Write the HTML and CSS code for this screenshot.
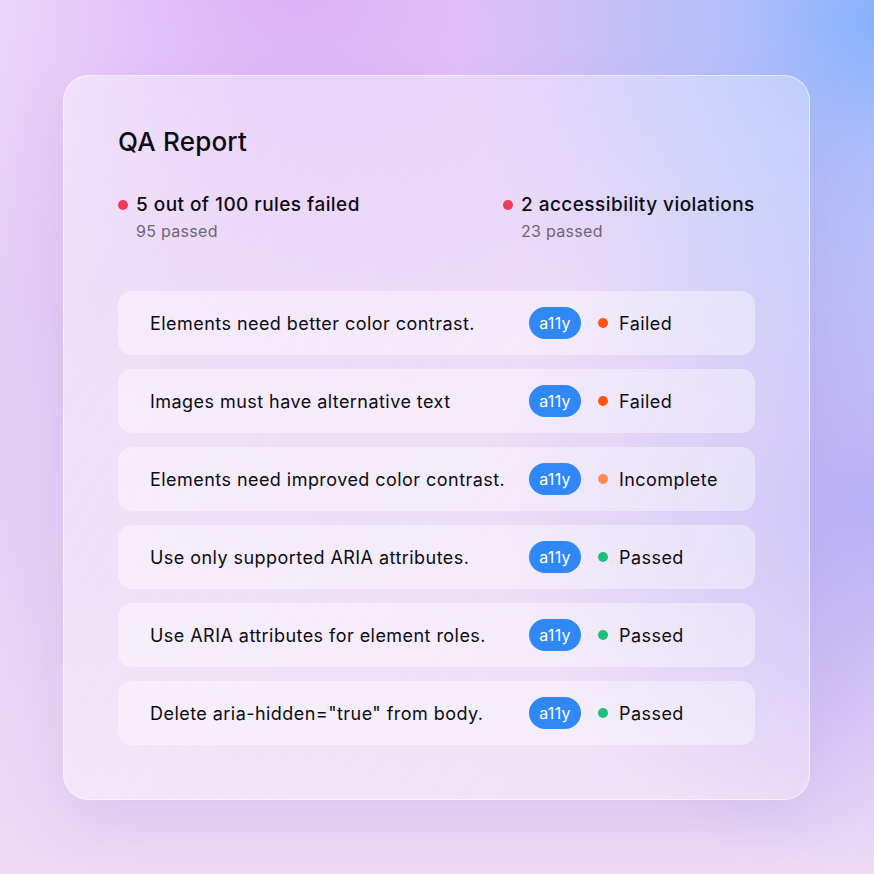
FILE: index.html
```html
<!DOCTYPE html>
<html>
<head>
<meta charset="utf-8">
<link rel="stylesheet" href="styles.css">
</head>
<body>
<div class="page">
  <div class="card">
    <h1 class="title">QA Report</h1>
    <div class="stats">
      <div class="stat">
        <div class="stat-main"><span class="dot red"></span>5 out of 100 rules failed</div>
        <div class="stat-sub">95 passed</div>
      </div>
      <div class="stat">
        <div class="stat-main"><span class="dot red"></span>2 accessibility violations</div>
        <div class="stat-sub">23 passed</div>
      </div>
    </div>
    <div class="rows">
      <div class="row"><span class="rule">Elements need better color contrast.</span><span class="badge">a11y</span><span class="status"><span class="sdot failed"></span>Failed</span></div>
      <div class="row"><span class="rule">Images must have alternative text</span><span class="badge">a11y</span><span class="status"><span class="sdot failed"></span>Failed</span></div>
      <div class="row"><span class="rule">Elements need improved color contrast.</span><span class="badge">a11y</span><span class="status"><span class="sdot incomplete"></span>Incomplete</span></div>
      <div class="row"><span class="rule">Use only supported ARIA attributes.</span><span class="badge">a11y</span><span class="status"><span class="sdot passed"></span>Passed</span></div>
      <div class="row"><span class="rule">Use ARIA attributes for element roles.</span><span class="badge">a11y</span><span class="status"><span class="sdot passed"></span>Passed</span></div>
      <div class="row"><span class="rule">Delete aria-hidden="true" from body.</span><span class="badge">a11y</span><span class="status"><span class="sdot passed"></span>Passed</span></div>
    </div>
  </div>
</div>
</body>
</html>
```
FILE: styles.css
```css
html, body {
  margin: 0;
  padding: 0;
}
body {
  font-family: Inter, "Noto Sans", sans-serif;
  color: #0d0b14;
}
.page {
  width: 874px;
  height: 874px;
  box-sizing: border-box;
  padding: 75px 64px 0 63px;
  background:
    radial-gradient(circle at 880px 20px, #85b2fd 0, rgba(140,180,252,0.6) 140px, rgba(170,180,250,0) 420px),
    radial-gradient(circle at 300px -20px, #dcb2f8 0, rgba(222,184,248,0.6) 200px, rgba(222,184,248,0) 450px),
    radial-gradient(circle at 880px 500px, #b8b0f6 0, rgba(190,180,248,0) 380px),
    radial-gradient(circle at 0px 0px, #f2e6f8 0, rgba(242,230,248,0) 300px),
    linear-gradient(180deg, #e6ccf6 0%, #e4d0f4 60%, #eedcf6 100%);
}
.card {
  width: 747px;
  height: 725px;
  box-sizing: border-box;
  border-radius: 26px;
  background: linear-gradient(120deg, rgba(255,255,255,0.42) 0%, rgba(255,255,255,0.3) 60%, rgba(255,255,255,0.25) 100%);
  border: 1.5px solid rgba(255,255,255,0.55);
  box-shadow: 0 30px 60px rgba(130, 90, 190, 0.14);
  padding: 50px 54px 0 54px;
}
.title {
  margin: 0;
  font-size: 26px;
  font-weight: 500;
  line-height: 32px;
  letter-spacing: 0.2px;
}
.stats {
  display: flex;
  margin-top: 35px;
}
.stat {
  flex: none;
}
.stat:first-child {
  width: 385px;
}
.stat-main {
  display: flex;
  align-items: center;
  font-size: 19px;
  font-weight: 500;
  line-height: 24px;
  letter-spacing: 0.45px;
}
.dot {
  width: 10px;
  height: 10px;
  border-radius: 50%;
  margin: 0 8px 0 0;
  flex: none;
}
.red { background: #f03a5c; }
.stat-sub {
  margin-top: 4px;
  padding-left: 18px;
  font-size: 16px;
  color: #6e6478;
  line-height: 20px;
  letter-spacing: 0.3px;
}
.rows {
  margin-top: 50px;
  display: flex;
  flex-direction: column;
  gap: 14px;
}
.row {
  height: 64px;
  border-radius: 14px;
  background: rgba(255,255,255,0.4);
  display: flex;
  align-items: center;
  padding-left: 32px;
  font-size: 18px;
  font-weight: 400;
  letter-spacing: 0.45px;
}
.rule {
  width: 379px;
  flex: none;
}
.badge {
  width: 52px;
  height: 32px;
  border-radius: 16px;
  background: #2f88f6;
  color: #fff;
  display: flex;
  align-items: center;
  justify-content: center;
  font-size: 16px;
  letter-spacing: 0.3px;
  flex: none;
}
.status {
  display: flex;
  align-items: center;
  margin-left: 17px;
}
.sdot {
  width: 10px;
  height: 10px;
  border-radius: 50%;
  margin-right: 11px;
}
.failed { background: #ff5416; }
.incomplete { background: #ff8c50; }
.passed { background: #1fbf7e; }
```
